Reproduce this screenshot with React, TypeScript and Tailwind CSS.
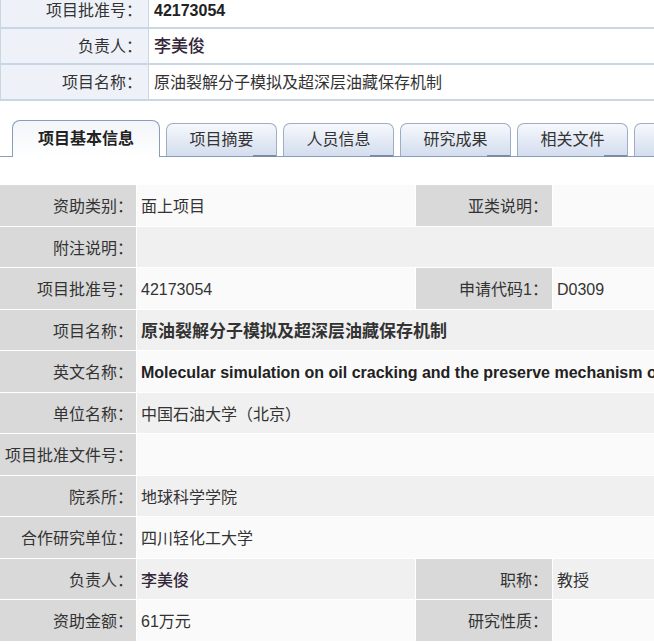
import React from "react";

const font = { fontFamily: '"Liberation Sans", "Noto Sans CJK SC", sans-serif' };

function TopRow({ label, children }: { label: string; children: React.ReactNode }) {
  return (
    <div className="flex h-[36px] border-b-2 border-[#c9d6e4]">
      <div className="flex w-[148px] shrink-0 items-center justify-end border-r border-[#c9d6e4] bg-[#eef2f8] pr-[6px] pt-[2px] text-[16px] text-[#333]">
        {label}
      </div>
      <div className="flex flex-1 items-center whitespace-nowrap bg-white pl-[5px] pt-[2px] text-[16px] text-[#333]">
        {children}
      </div>
    </div>
  );
}

function Tab({ label }: { label?: string }) {
  return (
    <div className="relative ml-[6px] flex h-[33px] w-[111px] shrink-0 items-center justify-center rounded-t-[7px] border border-b-0 border-[#9cadc6] bg-gradient-to-b from-[#f6f8fc] to-[#d3ddee] text-[16px] text-[#333]">
      {label}
      <div className="absolute bottom-[-1px] right-0 h-[2px] w-[23px] bg-[#7a8ba4]" />
    </div>
  );
}

type Row = {
  l1: string;
  v1?: React.ReactNode;
  l2?: string;
  v2?: React.ReactNode;
};

const rows: Row[] = [
  { l1: "资助类别：", v1: "面上项目", l2: "亚类说明：", v2: "" },
  { l1: "附注说明：", v1: "" },
  { l1: "项目批准号：", v1: "42173054", l2: "申请代码1：", v2: "D0309" },
  {
    l1: "项目名称：",
    v1: <span className="text-[17px] font-bold text-[#333]">原油裂解分子模拟及超深层油藏保存机制</span>,
  },
  {
    l1: "英文名称：",
    v1: (
      <span className="font-bold text-[#222]">
        Molecular simulation on oil cracking and the preserve mechanism of ultra-deep oil reservoirs
      </span>
    ),
  },
  { l1: "单位名称：", v1: "中国石油大学（北京）" },
  { l1: "项目批准文件号：", v1: "" },
  { l1: "院系所：", v1: "地球科学学院" },
  { l1: "合作研究单位：", v1: "四川轻化工大学" },
  {
    l1: "负责人：",
    v1: <span className="font-medium text-[#33263a]">李美俊</span>,
    l2: "职称：",
    v2: "教授",
  },
  { l1: "资助金额：", v1: "61万元", l2: "研究性质：", v2: "" },
];

export default function App() {
  return (
    <div className="h-[644px] w-[654px] overflow-hidden bg-white" style={font}>
      {/* top summary table */}
      <div className="-mt-[7px] border-l border-[#c9d6e4]">
        <TopRow label="项目批准号：">
          <span className="font-bold text-[#222]">42173054</span>
        </TopRow>
        <TopRow label="负责人：">
          <span className="text-[17px] font-medium text-[#33263a]">李美俊</span>
        </TopRow>
        <TopRow label="项目名称：">原油裂解分子模拟及超深层油藏保存机制</TopRow>
      </div>

      {/* tabs */}
      <div className="mt-[19px] flex h-[37px] items-end border-b border-[#8a9db8]">
        <div className="w-[12px] shrink-0" />
        <div className="-mb-px flex h-[37px] w-[148px] shrink-0 items-center justify-center rounded-t-[8px] border border-b-0 border-[#8a9db8] bg-gradient-to-b from-[#f2f5f9] to-white text-[16px] font-bold text-[#222]">
          项目基本信息
        </div>
        <Tab label="项目摘要" />
        <Tab label="人员信息" />
        <Tab label="研究成果" />
        <Tab label="相关文件" />
        <Tab />
      </div>

      {/* main table */}
      <div className="mt-[28px] flex flex-col gap-px">
        {rows.map((r, i) => {
          const odd = i % 2 === 0;
          const valBg = odd ? "bg-[#fafafa]" : "bg-[#f0f0f0]";
          const h = odd ? "h-[41px]" : "h-[40px]";
          return (
            <div key={i} className={`flex gap-px ${h} text-[16px] text-[#333]`}>
              <div className="flex w-[136px] shrink-0 items-center justify-end whitespace-nowrap bg-[#d9d9d9] pr-[3px] pt-[3px]">
                {r.l1}
              </div>
              {r.l2 !== undefined ? (
                <>
                  <div className={`flex w-[278px] shrink-0 items-center whitespace-nowrap pl-[4px] pt-[3px] ${valBg}`}>
                    {r.v1}
                  </div>
                  <div className="flex w-[136px] shrink-0 items-center justify-end whitespace-nowrap bg-[#d9d9d9] pr-[4px] pt-[3px]">
                    {r.l2}
                  </div>
                  <div className={`flex flex-1 items-center whitespace-nowrap pl-[4px] pt-[3px] ${valBg}`}>
                    {r.v2}
                  </div>
                </>
              ) : (
                <div className={`flex flex-1 items-center whitespace-nowrap pl-[4px] pt-[3px] ${valBg}`}>
                  {r.v1}
                </div>
              )}
            </div>
          );
        })}
      </div>
    </div>
  );
}
